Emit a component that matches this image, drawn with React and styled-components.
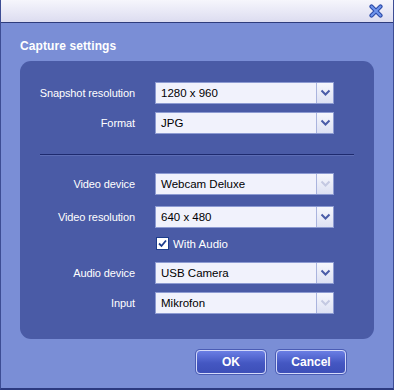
import styled, { createGlobalStyle } from "styled-components";

const GlobalStyle = createGlobalStyle`
  html, body {
    margin: 0;
    padding: 0;
    background: #7a8ed6;
  }
  * {
    box-sizing: border-box;
  }
`;

const Window = styled.div`
  width: 394px;
  height: 390px;
  display: flex;
  flex-direction: column;
  background: #7a8ed6;
  border-left: 1px solid #3d4d94;
  border-right: 1px solid #3d4d94;
  border-bottom: 2px solid #2c3a80;
  font-family: "Liberation Sans", Arial, sans-serif;
  font-size: 11px;
  color: #fff;
`;

const TitleBar = styled.div`
  height: 23px;
  flex: none;
  display: flex;
  justify-content: flex-end;
  align-items: center;
  padding-right: 10px;
  background: linear-gradient(#f6f6fc, #dcdcf0);
  border-bottom: 1px solid #2e3c7c;
`;

const Body = styled.div`
  flex: 1;
  display: flex;
  flex-direction: column;
  padding: 0 19px 0 19px;
`;

const Heading = styled.div`
  margin-top: 16px;
  height: 15px;
  line-height: 15px;
  font-size: 12px;
  font-weight: bold;
  letter-spacing: 0.1px;
`;

const Panel = styled.div`
  margin-top: 7px;
  background: #4a5ba6;
  border-radius: 11px;
  padding: 21px 0 25px 0;
  display: flex;
  flex-direction: column;
`;

const Row = styled.div`
  display: flex;
  align-items: center;
  margin-top: ${(p) => p.$top || 0}px;
`;

const Label = styled.div`
  width: 116px;
  text-align: right;
  padding-right: 1px;
  margin-right: 19px;
  white-space: nowrap;
  letter-spacing: -0.1px;
`;

const Combo = styled.div`
  width: 179px;
  height: 22px;
  display: flex;
  background: #f1f2fc;
  border: 1px solid #8d9bd2;
`;

const ComboText = styled.div`
  flex: 1;
  padding-left: 5px;
  line-height: 20px;
  color: #000;
  font-size: 11.5px;
`;

const ComboButton = styled.div`
  width: 17px;
  height: 20px;
  display: flex;
  align-items: center;
  justify-content: center;
  border-left: 1px solid #aab4de;
  background: linear-gradient(#f6f7fd, #dde1f3);
`;

const Divider = styled.div`
  margin: 20px 20px 0 20px;
  height: 1px;
  background: #1d2a6e;
  box-shadow: 0 1px 0 #5d6db4;
`;

const CheckRow = styled.label`
  display: flex;
  align-items: center;
  margin: 9px 0 0 136px;
  font-size: 11.5px;
`;

const Box = styled.span`
  width: 13px;
  height: 13px;
  display: flex;
  align-items: center;
  justify-content: center;
  background: #fff;
  border: 1px solid #1c3c8c;
  margin-right: 4px;
`;

const Buttons = styled.div`
  display: flex;
  justify-content: flex-end;
  gap: 10px;
  margin-top: 11px;
  padding-right: 28px;
`;

const Button = styled.div`
  width: 70px;
  height: 24px;
  display: flex;
  align-items: center;
  justify-content: center;
  border-radius: 4px;
  border: 1px solid #d4dafa;
  box-shadow: 0 0 0 1px #4a5cb4;
  background: linear-gradient(#6a7ee4, #4457c2 55%, #3d4fb8);
  font-weight: bold;
  font-size: 12px;
  color: #fff;
`;

function Arrow({ disabled }) {
  return (
    <svg width="11" height="8" viewBox="0 0 11 8">
      <path
        d="M1.5 1.5 L5.5 5.5 L9.5 1.5"
        fill="none"
        stroke={disabled ? "#c4c9e2" : "#4a5ca8"}
        strokeWidth="2"
      />
    </svg>
  );
}

function Select({ value, disabled }) {
  return (
    <Combo>
      <ComboText>{value}</ComboText>
      <ComboButton>
        <Arrow disabled={disabled} />
      </ComboButton>
    </Combo>
  );
}

function CloseIcon() {
  return (
    <svg width="14" height="14" viewBox="0 0 14 14">
      <path
        d="M2.5 2.5 L11.5 11.5 M11.5 2.5 L2.5 11.5"
        stroke="#2c4aa8"
        strokeWidth="4.2"
        strokeLinecap="round"
      />
      <path
        d="M2.5 2.5 L11.5 11.5 M11.5 2.5 L2.5 11.5"
        stroke="#6f95ee"
        strokeWidth="2"
        strokeLinecap="round"
      />
    </svg>
  );
}

export default function App() {
  return (
    <>
      <GlobalStyle />
      <Window>
        <TitleBar>
          <CloseIcon />
        </TitleBar>
        <Body>
          <Heading>Capture settings</Heading>
          <Panel>
            <Row>
              <Label>Snapshot resolution</Label>
              <Select value="1280 x 960" />
            </Row>
            <Row $top={8}>
              <Label>Format</Label>
              <Select value="JPG" />
            </Row>
            <Divider />
            <Row $top={18}>
              <Label>Video device</Label>
              <Select value="Webcam Deluxe" disabled />
            </Row>
            <Row $top={11}>
              <Label>Video resolution</Label>
              <Select value="640 x 480" />
            </Row>
            <CheckRow>
              <Box>
                <svg width="9" height="9" viewBox="0 0 9 9">
                  <path
                    d="M1 4.5 L3.5 7 L8 1.5"
                    fill="none"
                    stroke="#1c3c8c"
                    strokeWidth="1.8"
                  />
                </svg>
              </Box>
              With Audio
            </CheckRow>
            <Row $top={12}>
              <Label>Audio device</Label>
              <Select value="USB Camera" />
            </Row>
            <Row $top={8}>
              <Label>Input</Label>
              <Select value="Mikrofon" disabled />
            </Row>
          </Panel>
          <Buttons>
            <Button>OK</Button>
            <Button>Cancel</Button>
          </Buttons>
        </Body>
      </Window>
    </>
  );
}
